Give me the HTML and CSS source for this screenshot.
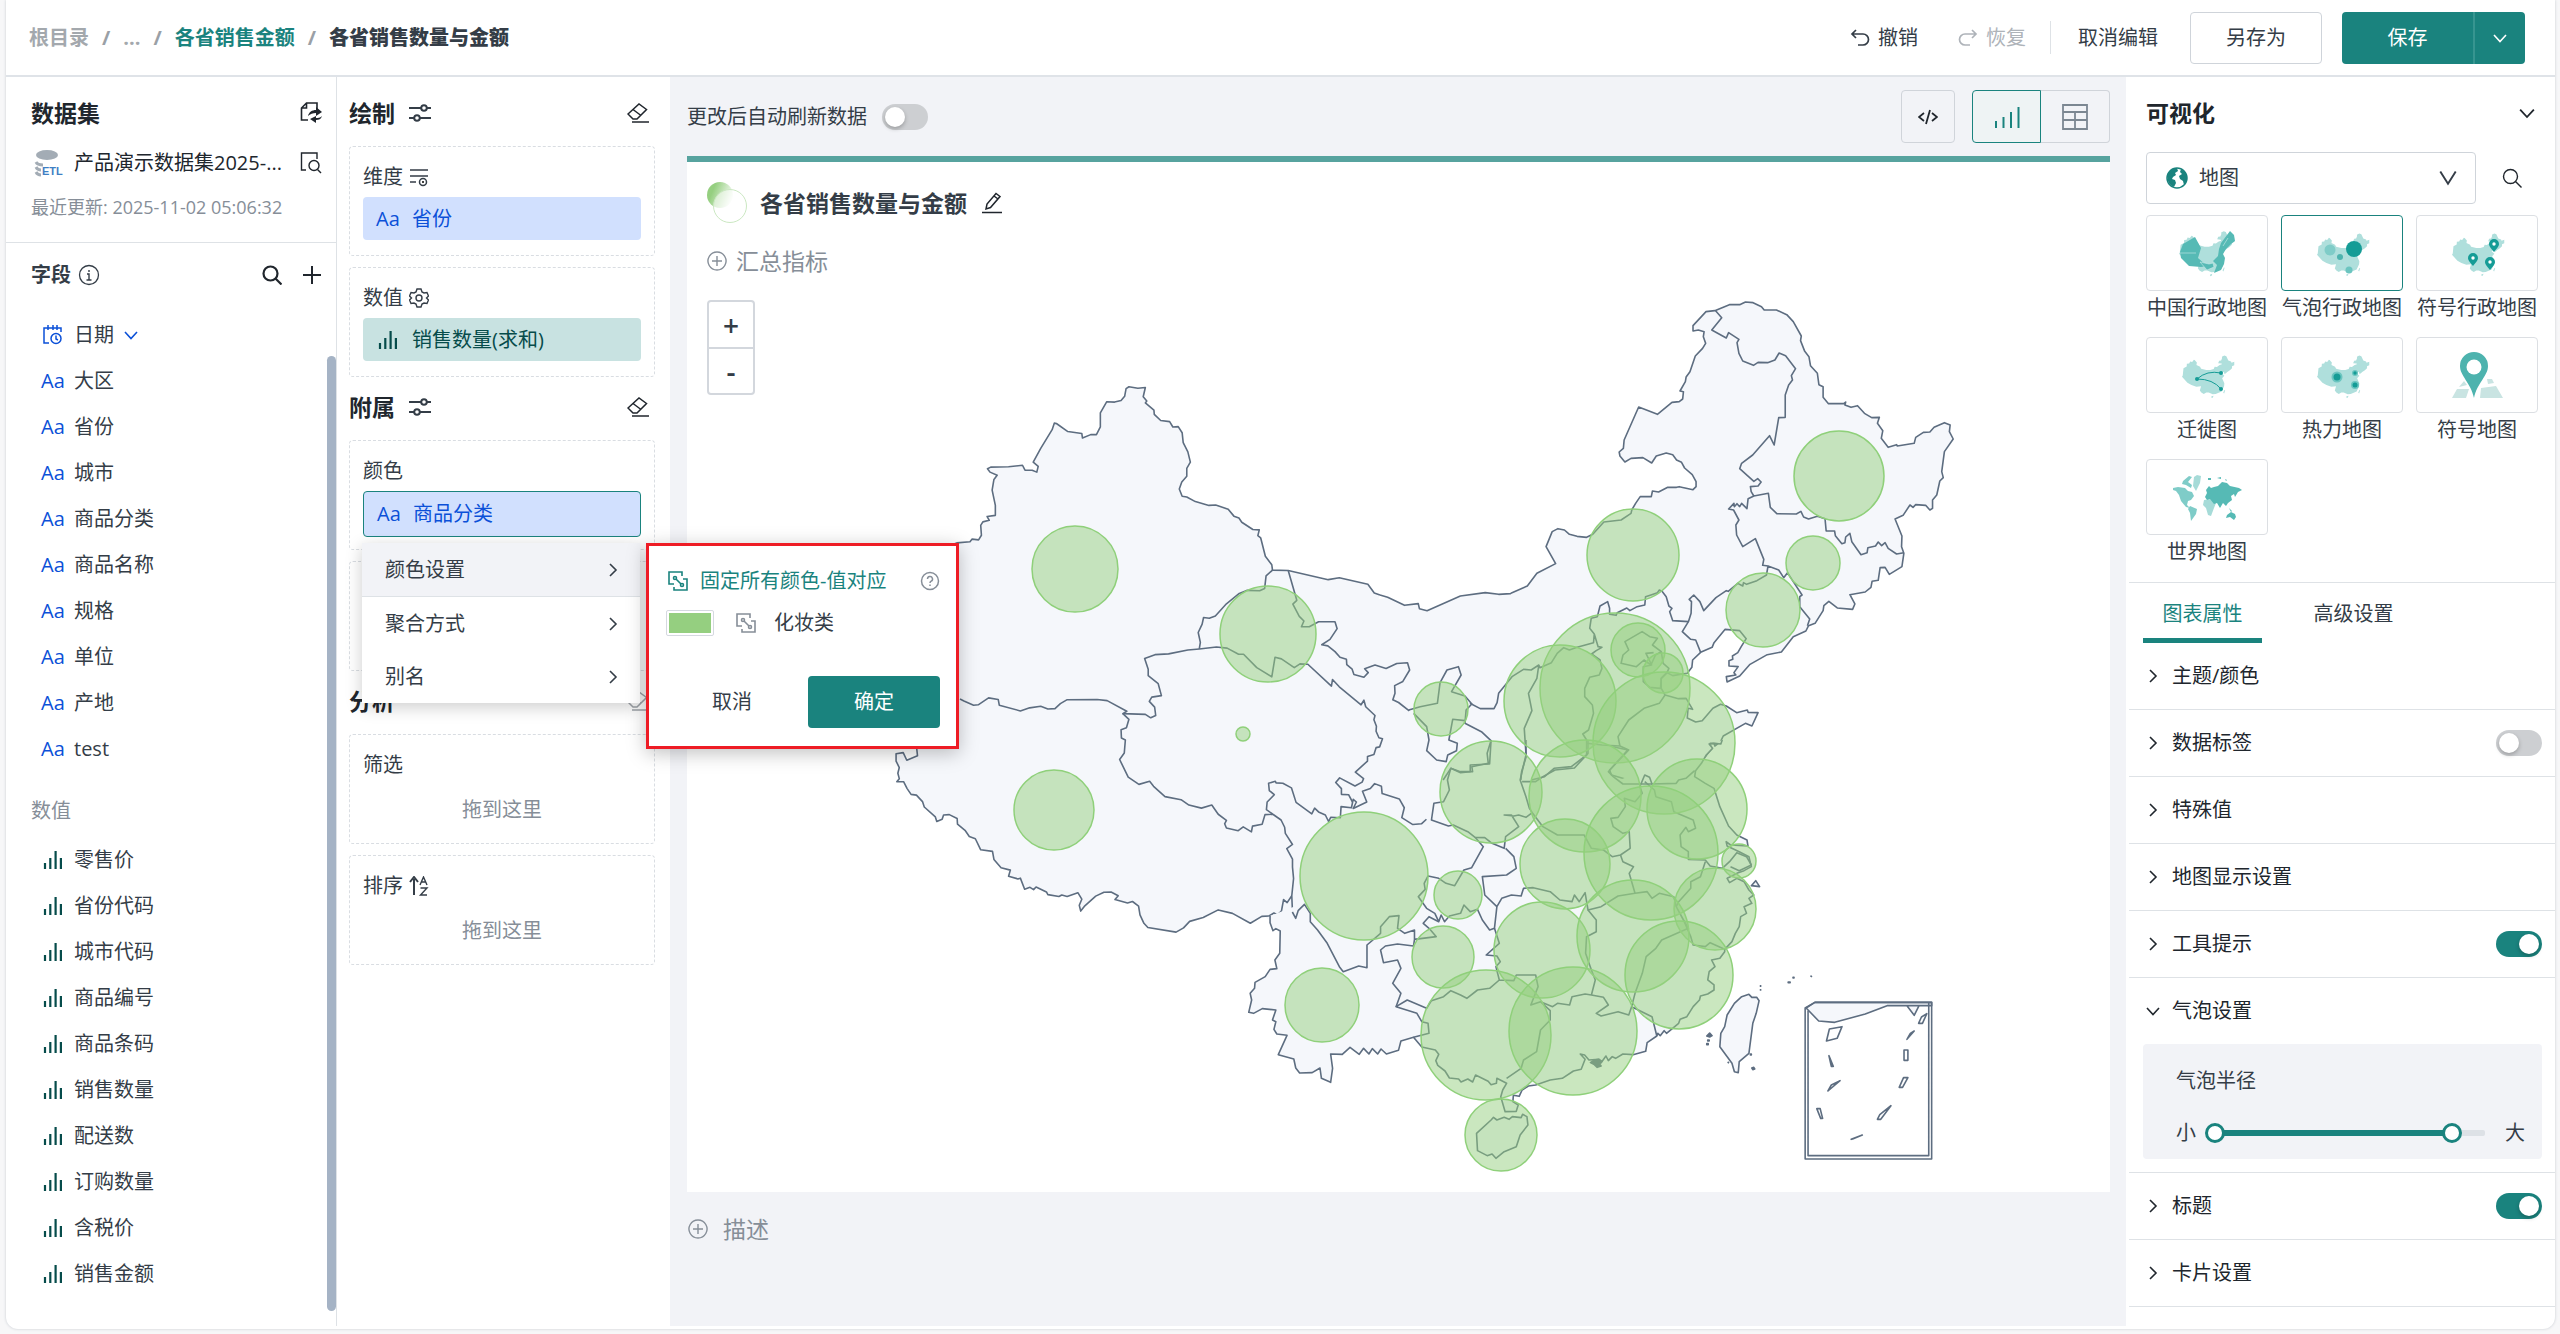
FILE: index.html
```html
<!DOCTYPE html>
<html lang="zh-CN">
<head>
<meta charset="utf-8">
<title>各省销售数量与金额</title>
<link rel="stylesheet" href="styles.css">
</head>
<body>
<svg class="sprite" aria-hidden="true">
  <symbol id="bars" viewBox="0 0 20 20"><path d="M2 19v-6M7.300 19V8M12.600 19V1M17.900 19V8" fill="none" stroke="currentColor" stroke-width="2.200"/></symbol>
  <symbol id="sliders" viewBox="0 0 22 20"><g fill="none" stroke="currentColor" stroke-width="2"><path d="M0 5h12M18 5h4M0 15h5M11 15h11"/><circle cx="15" cy="5" r="2.800"/><circle cx="8" cy="15" r="2.800"/></g></symbol>
  <symbol id="eraser" viewBox="0 0 22 20"><g fill="none" stroke="currentColor" stroke-width="1.500"><path d="M1 11 12 1l7.500 5.500L10 16H6zM6 6.500l8 6M5 19h17"/></g></symbol>
  <symbol id="down" viewBox="0 0 14 14"><path d="M1 4l6 6.500L13 4" fill="none" stroke="currentColor" stroke-width="1.600"/></symbol>
  <symbol id="right" viewBox="0 0 14 14"><path d="M4 1l6 6-6 6" fill="none" stroke="currentColor" stroke-width="1.600"/></symbol>
  <symbol id="search" viewBox="0 0 20 20"><g fill="none" stroke="currentColor"><circle cx="8.500" cy="8.500" r="7"/><path d="M13.500 13.500 19.500 19.500"/></g></symbol>
  <symbol id="pluscircle" viewBox="0 0 20 20"><path d="M10 1a9 9 0 1 0 .01 0M10 5v10M5 10h10" fill="none" stroke="currentColor" stroke-width="1.400"/></symbol>
  <symbol id="link" viewBox="0 0 20 20"><g fill="none" stroke="currentColor" stroke-width="1.600"><path d="M6 13H1V1h13v4M15 8h4v11H6v-3M8 8l5 5"/><circle cx="7" cy="7" r="1.500"/><circle cx="14" cy="14" r="1.500"/></g></symbol>
  <symbol id="china" viewBox="890 295 1070 880"><path d="M890 730 905 705 920 560 985 525 988 465 1035 460 1055 420 1095 430 1130 385 1145 390 1190 440 1182 495 1255 530 1275 568 1380 595 1460 596 1530 575 1550 530 1595 535 1650 495 1695 480 1690 460 1620 455 1640 407 1680 400 1700 350 1695 325 1745 300 1785 315 1825 400 1880 420 1890 447 1945 425 1945 500 1900 520 1900 560 1850 605 1810 630 1750 680 1735 630 1690 660 1745 712 1700 760 1745 860 1740 920 1690 1030 1570 1080 1510 1085 1430 1050 1380 1050 1330 1080 1280 1050 1250 1010 1275 920 1180 930 1080 895 1000 850ZM1480 1130 1525 1115 1515 1150 1490 1160ZM1748 995 1762 1000 1740 1070 1722 1050Z" fill="currentColor"/></symbol>
</svg>

<div class="app">
<header class="topbar">
  <nav class="crumbs" aria-label="面包屑">
    <a href="#" class="muted">根目录</a><span>/</span><a href="#" class="muted">...</a><span>/</span><a href="#">各省销售金额</a><span>/</span><strong>各省销售数量与金额</strong>
  </nav>
  <div class="actions">
    <button class="plain"><svg class="i20" viewBox="0 0 20 20"><path d="M6 2 2 6l4 4M2 6h11a5 5 0 0 1 0 11H8" fill="none" stroke="currentColor" stroke-width="1.700"/></svg>撤销</button>
    <button class="plain redo" disabled><svg class="i20" viewBox="0 0 20 20"><path d="M14 2l4 4-4 4M18 6H7a5 5 0 0 0 0 11h5" fill="none" stroke="currentColor" stroke-width="1.700"/></svg>恢复</button>
    <span class="vline"></span>
    <button class="plain">取消编辑</button>
    <button class="outline">另存为</button>
    <div class="split"><button>保存</button><button class="more" aria-label="更多"><svg class="i14" ><use href="#down"/></svg></button></div>
  </div>
</header>

<div class="work">
<aside class="fields">
  <section class="dataset">
    <div class="head"><h2>数据集</h2><button class="icon" aria-label="更换数据集"><svg class="i22" viewBox="0 0 22 22"><path d="M8 18H1.500V6l5-5H17v6M6.500 1v5h-5" fill="none" stroke="currentColor" stroke-width="1.600"/><path d="M8 14c1-4 4-6 8-6V5l6 5-6 4v-3c-3 0-6 1-8 3zM22 14c-1 3-3 4-6 4v3l-6-4 6-3v2c2 0 4 0 6-2z" fill="currentColor"/></svg></button></div>
    <div class="dsrow">
      <svg class="etl" viewBox="0 0 28 26"><ellipse cx="12" cy="5" rx="11" ry="5" fill="#a3acb5"/><path d="M1 12c1 2 3 3 7 3M1 17c1 2 3 3 5 3M1 22c1 2 3 3 5 3" fill="none" stroke="#a3acb5" stroke-width="3"/><text x="7" y="25" class="etltext">ETL</text></svg>
      <span class="name">产品演示数据集2025-...</span>
      <button class="icon" aria-label="预览"><svg class="i22" viewBox="0 0 22 22"><g fill="none" stroke="currentColor" stroke-width="1.400"><path d="M6 18H1.500V1H17v6"/><circle cx="14" cy="13.500" r="5"/><path d="M17.500 17.500 21 21"/></g></svg></button>
    </div>
    <p class="updated">最近更新: 2025-11-02 05:06:32</p>
  </section>
  <section class="list">
    <div class="head small"><h3>字段</h3><svg class="i22" viewBox="0 0 22 22"><circle cx="11" cy="11" r="9.500" fill="none" stroke="currentColor" stroke-width="1.300"/><path d="M11 6v2M9 10h2v6M8.500 16h5" fill="none" stroke="currentColor" stroke-width="1.400"/></svg>
      <span class="grow"></span><button class="icon bold" aria-label="搜索"><svg class="i20"><use href="#search"/></svg></button><button class="icon" aria-label="新建"><svg class="i20" viewBox="0 0 20 20"><path d="M10 1v18M1 10h18" stroke="currentColor" stroke-width="2"/></svg></button></div>
    <ul class="dims">
      <li><svg class="cal" viewBox="0 0 20 20"><g fill="none" stroke="currentColor" stroke-width="1.500"><path d="M6 18H1V3h17v4M5 0v5M10 0v5M14 0v5"/><circle cx="13" cy="13.500" r="5"/><path d="M13 10.500v3.500l2 1"/></g></svg>日期<svg class="i14 blue"><use href="#down"/></svg></li>
      <li><i>Aa</i>大区</li><li><i>Aa</i>省份</li><li><i>Aa</i>城市</li><li><i>Aa</i>商品分类</li><li><i>Aa</i>商品名称</li><li><i>Aa</i>规格</li><li><i>Aa</i>单位</li><li><i>Aa</i>产地</li><li><i>Aa</i>test</li>
    </ul>
    <h4>数值</h4>
    <ul class="measures">
      <li><svg><use href="#bars"/></svg>零售价</li><li><svg><use href="#bars"/></svg>省份代码</li><li><svg><use href="#bars"/></svg>城市代码</li><li><svg><use href="#bars"/></svg>商品编号</li><li><svg><use href="#bars"/></svg>商品条码</li><li><svg><use href="#bars"/></svg>销售数量</li><li><svg><use href="#bars"/></svg>配送数</li><li><svg><use href="#bars"/></svg>订购数量</li><li><svg><use href="#bars"/></svg>含税价</li><li><svg><use href="#bars"/></svg>销售金额</li>
    </ul>
    <div class="scroll"></div>
  </section>
</aside>

<aside class="shelves">
  <div class="shead"><h2>绘制</h2><svg class="sl"><use href="#sliders"/></svg><span class="grow"></span><button class="icon" aria-label="清空绘制"><svg class="sl"><use href="#eraser"/></svg></button></div>
  <div class="box"><div class="label">维度<svg class="i20" viewBox="0 0 20 20"><g fill="none" stroke="currentColor" stroke-width="1.500"><path d="M1 3h18M1 9h18M1 15h6"/><circle cx="14" cy="15" r="3.500"/></g><circle cx="14" cy="15" r="1"/></svg></div><div class="pill dim"><i>Aa</i>省份</div></div>
  <div class="box"><div class="label">数值<svg class="i20" viewBox="0 0 20 20"><g fill="none" stroke="currentColor" stroke-width="1.400"><path d="M8 1h4l1 3 2 1 3-.500 1.500 3.500-2 2 2 2L18 15.500l-3-.500-2 1-1 3H8l-1-3-2-1-3 .500L.500 12l2-2-2-2L2 4.500 5 5l2-1z"/><circle cx="10" cy="10" r="3"/></g></svg></div><div class="pill mea"><svg><use href="#bars"/></svg>销售数量(求和)</div></div>
  <div class="shead"><h2>附属</h2><svg class="sl"><use href="#sliders"/></svg><span class="grow"></span><button class="icon" aria-label="清空附属"><svg class="sl"><use href="#eraser"/></svg></button></div>
  <div class="box"><div class="label">颜色</div>
    <div class="pill dim open"><i>Aa</i>商品分类
      <div class="menu">
        <button class="on">颜色设置<svg class="i14"><use href="#right"/></svg></button>
        <button>聚合方式<svg class="i14"><use href="#right"/></svg></button>
        <button>别名<svg class="i14"><use href="#right"/></svg></button>
        <div class="flyout">
          <div class="frow teal"><svg class="i20"><use href="#link"/></svg><span>固定所有颜色-值对应</span><span class="grow"></span><svg class="i20 help" viewBox="0 0 20 20"><g fill="none" stroke="currentColor" stroke-width="1.500"><circle cx="10" cy="10" r="8.500"/><path d="M7.500 8a2.500 2.500 0 1 1 3.700 2.200c-.9.500-1.200.9-1.200 1.800M10 13.500v1.500"/></g></svg></div>
          <div class="frow"><button class="swatch" aria-label="选择颜色"></button><svg class="i20 help"><use href="#link"/></svg><span class="cat">化妆类</span></div>
          <div class="fbtns"><button>取消</button><button class="primary">确定</button></div>
        </div>
      </div>
    </div>
  </div>
  <div class="box"></div>
  <div class="shead"><h2>分析</h2><span class="grow"></span><button class="icon faded" aria-label="清空分析"><svg class="sl"><use href="#eraser"/></svg></button></div>
  <div class="box"><div class="label">筛选</div><p class="drop">拖到这里</p></div>
  <div class="box"><div class="label">排序<svg class="i20" viewBox="0 0 20 20"><path d="M5 19V3M1 6l4-5 4 5" fill="none" stroke="currentColor" stroke-width="2"/><path d="M11 9l3.500-8L18 9M12.500 6h4M11.500 12H18l-6.500 7H18" fill="none" stroke="currentColor" stroke-width="1.400"/></svg></div><p class="drop">拖到这里</p></div>
</aside>

<main>
  <div class="tools">
    <label class="auto">更改后自动刷新数据<input type="checkbox" class="switch"></label>
    <span class="grow"></span>
    <button class="tool code" aria-label="代码"><svg class="i20" viewBox="0 0 20 20"><path d="M6 6l-5 4 5 4M14 6l5 4-5 4M12 3 8 17" fill="none" stroke="currentColor" stroke-width="1.800"/></svg></button>
    <div class="views"><button class="tool on" aria-label="图表"><svg class="i26" viewBox="0 0 26 26"><path d="M2 24v-7M9.500 24V13M17 24V8M24.500 24V3" fill="none" stroke="currentColor" stroke-width="2"/></svg></button><button class="tool" aria-label="表格"><svg class="i26" viewBox="0 0 26 26"><path d="M1 1h24v24H1zM1 8h24M1 16h24M13 8v17" fill="none" stroke="currentColor" stroke-width="1.800"/></svg></button></div>
  </div>
  <article class="card">
    <div class="ctitle"><svg class="dot" viewBox="0 0 42 42"><defs><linearGradient id="fade" x1="0" y1=".3" x2="1" y2=".7"><stop offset=".2" stop-color="#95cf80"/><stop offset="1" stop-color="#fff"/></linearGradient></defs><circle cx="13" cy="13" r="13" fill="url(#fade)"/><circle cx="23" cy="24" r="16.500" fill="#fff" fill-opacity=".55" stroke="#cbe8c2"/></svg><h1>各省销售数量与金额</h1>
      <button class="icon" aria-label="编辑标题"><svg class="i22" viewBox="0 0 22 22"><path d="M5 17l1-5L15 1.500l4 3L9.500 15.500zM13 4l4 3M1 20.500h20" fill="none" stroke="currentColor" stroke-width="1.500"/></svg></button></div>
    <button class="add"><svg class="i20"><use href="#pluscircle"/></svg>汇总指标</button>
    <div class="mapwrap">
      <div class="zoomer"><button aria-label="放大">+</button><button aria-label="缩小">-</button></div>
      <svg class="map" viewBox="687 291 1423 901" role="img" aria-label="各省销售数量气泡图">
        <path class="base" d="M1374 600 1250 905 1275 925 1722 744 1700 752 1386 598Z"/>
        <!-- west -->
        <g class="land" transform="translate(880 360) scale(.35714 .38268)">
          <path d="M1089 1453 1069 1454 1037 1472 987 1446 947 1437 905 1457 867 1467 850 1484 829 1495 750 1483 739 1472 728 1450 724 1427 707 1415 693 1419 658 1410 667 1400 647 1390 627 1391 604 1401 572 1428 562 1440 558 1425 565 1409 554 1392 524 1402 509 1398 501 1402 470 1397 466 1390 437 1377 430 1384 420 1378 405 1383 393 1354 386 1356 360 1349 365 1333 339 1327 319 1305 315 1284 282 1280 267 1251 250 1245 238 1229 217 1213 216 1198 194 1188 178 1189 174 1200 159 1206 155 1194 124 1168 119 1154 102 1137 87 1135 76 1120 66 1102 47 1102 54 1094 50 1080 54 1065 45 1048 45 1029 65 1026 75 1046 105 1034 103 1017 110 900 150 500 215 478 252 475 258 468 276 470 284 458 282 432 288 423 306 419 300 409 323 406 323 380 314 340 319 312 328 301 308 293 301 284 310 280 360 279 399 275 406 288 426 288 439 293 443 278 429 267 450 231 482 182 488 165 494 166 526 187 565 192 567 204 590 195 606 195 617 175 617 138 635 109 657 110 675 106 685 95 689 75 697 70 722 74 743 72 737 96 747 107 743 112 767 131 768 142 786 158 811 161 820 175 835 174 846 190 849 216 862 240 869 267 859 283 859 304 845 319 838 337 846 356 859 358 883 370 921 380 940 379 975 390 991 408 1005 413 1013 424 1044 443 1062 444 1058 459 1066 465 1079 513 1097 535 1099 549 1143 550 1255 574 1286 569 1366 586 1384 609 1400 614"/>
          <path class="line" d="M224 886 235 891 262 902 275 901 304 883 331 887 334 902 393 917 419 909 450 905 470 912 490 911 505 898 523 888 608 887 636 890 691 918 680 924 743 926 758 935 772 929 769 907 754 892 761 881 788 877 779 846 751 825 751 808 741 780 770 770 808 768 862 758 894 755 942 750 972 753 1004 769 1018 769 1055 804 1097 828 1106 777 1124 781 1160 804 1176 794 1198 795 1264 852 1267 835 1286 854 1347 901 1355 889 1360 906 1386 929 1383 940 1390 957 1389 970 1397 987 1407 990 1399 1011 1389 1013 1383 1031 1365 1036 1365 1048 1331 1077 1354 1094 1350 1103 1330 1113 1287 1092 1276 1104 1292 1120 1292 1135 1312 1136 1323 1155"/>
          <path class="line" d="M894 755 897 738 891 712 902 690 906 673 922 675 939 669 970 637 1006 610 1027 602 1063 603 1077 597 1081 564 1099 549M1143 550 1160 605 1167 628 1156 638 1174 670 1187 682 1180 697 1202 697 1228 684 1274 684 1280 702 1260 730 1237 744 1254 747 1274 762 1288 777 1306 782 1307 796 1322 808 1327 822 1355 829 1367 817 1357 807 1386 797 1417 806 1447 793 1477 791 1483 810 1464 840 1441 851 1442 871 1436 888 1452 895 1482 917"/>
          <path class="line" d="M680 924 697 939 690 961 675 966 676 988 687 993 684 1027 671 1044 695 1090 725 1109 755 1101 766 1114 798 1141 843 1149 865 1163 900 1171 929 1163 947 1187 970 1203 965 1212 970 1223 1003 1230 1017 1220 1040 1233 1043 1218 1070 1213 1078 1188 1100 1187 1123 1202 1133 1221 1135 1237 1155 1266 1139 1277 1155 1304 1155 1325 1158 1355 1153 1400 1155 1443M1100 1187 1082 1175 1084 1155 1104 1136 1090 1125 1088 1106 1107 1101 1109 1105 1128 1106 1152 1118 1165 1156 1209 1186 1217 1171 1228 1181 1247 1189 1256 1206 1262 1195 1289 1196 1291 1167 1320 1170 1325 1148 1334 1155 1325 1172 1363 1155 1351 1127 1373 1120 1385 1107 1404 1114 1406 1133 1454 1147 1468 1170 1461 1196 1492 1214 1516 1212 1530 1200M1153 1400 1140 1418 1130 1410 1124 1440 1113 1450 1103 1445 1089 1453"/>
        </g>
        <!-- north-east -->
        <g class="land" transform="translate(1380 280) scale(.38265 .33333)">
          <path d="M838 1435 850 1430 865 1408 863 1390 873 1390 875 1398 890 1385 897 1368 955 1330 972 1338 988 1298 962 1297 960 1290 932 1298 905 1278 890 1273 870 1285 842 1322 825 1326 803 1314 805 1285 817 1288 800 1255 780 1256 745 1245 735 1225 735 1195 750 1178 765 1187 803 1180 815 1162 817 1140 838 1117 868 1102 873 1088 902 1048 940 1052 957 1076 944 1100 935 1118 921 1128 922 1138 912 1142 912 1158 936 1160 925 1178 930 1185 905 1190 907 1206 940 1188 967 1153 1012 1124 1049 1116 1080 1070 1113 1053 1120 1037 1137 1030 1158 992 1160 977 1173 964 1195 984 1235 988 1241 972 1228 944 1268 936 1283 922 1286 904 1302 901 1307 863 1320 862 1331 883 1364 860 1369 820 1363 800 1364 768 1346 717 1367 706 1385 675 1393 682 1400 674 1426 676 1437 690 1444 685 1444 660 1455 645 1463 603 1472 593 1468 575 1475 515 1498 477 1488 455 1490 435 1475 428 1448 442 1437 456 1420 457 1400 472 1396 490 1352 498 1350 494 1328 502 1310 475 1314 452 1300 430 1305 412 1285 413 1266 400 1248 377 1231 382 1215 375 1217 366 1212 371 1172 371 1158 352 1158 320 1147 314 1143 280 1125 257 1121 230 1110 214 1099 182 1101 168 1080 125 1063 104 1036 90 1004 90 997 80 975 68 955 66 940 74 913 74 875 92 852 95 818 137 818 153 832 150 847 155 845 170 851 190 843 205 824 228 810 275 800 291 798 305 784 333 793 335 791 357 782 365 763 367 725 403 676 381 638 480 636 505 625 516 627 528 640 546 656 535 687 533 710 549 722 528 748 519 765 524 775 540 788 547 796 564 816 584 826 605 826 620 818 629 782 620 775 622 752 622 728 636 712 633 709 650 680 650 668 670 658 690 656 700 630 720 585 726 556 763 540 772 515 769 495 763 482 750 465 746 450 755 434 800 459 851 410 880 385 918 345 938 341 941 310 943 275 938 210 948 123 992 103 986 100 971 64 976 20 952 0 945"/>
          <path class="line" d="M877 92 893 113 867 150 905 174 911 158 938 178 933 188 938 220 948 243 976 256 988 247 1013 248 1032 240 1043 219 1060 227 1086 266 1075 287 1078 300 1068 315 1059 345 1059 412 1042 413 1030 495 1018 467 974 525 945 550 940 566 977 604 987 596 996 606 988 618 968 620 970 635 977 648 1015 640 1020 682 1037 701 1088 702 1100 694 1107 711 1120 717 1143 709 1163 716 1166 753 1188 753 1190 767 1207 791 1215 788 1217 771 1228 760 1233 785 1257 824 1273 818 1275 803 1295 798 1302 786 1311 797 1320 788 1328 805 1350 822 1369 818"/>
          <path class="line" d="M977 648 962 656 959 686 945 670 940 680 933 671 926 680 925 670 911 687 924 690 938 720 930 735 932 765 948 800 981 776 1003 838 1000 856 1014 858 1010 885 985 902 958 913 950 908 948 918 935 910 910 934 905 932 878 953 846 992 836 965 820 945 808 958 814 965 813 1000 806 1025 790 1055 812 1078 825 1080 838 1117M1014 858 1042 870 1055 893 1065 878 1080 905 1103 945 1097 950 1097 980 1123 1017 1117 1037"/>
          <path class="line" d="M806 1025 765 1022 757 995 763 985 755 978 748 950 738 935 730 930 725 938 710 944 694 950 692 975 672 980 653 992 645 984 620 998 617 1006 600 1003 600 985 595 965 575 978 568 1010 552 1015 548 1045 560 1062 570 1100 580 1102 565 1112 553 1122 575 1140 580 1165 573 1185 548 1192 535 1225 535 1250 555 1275 558 1300 545 1350 530 1362 540 1380 540 1425 500 1460 455 1465 430 1490 395 1500M560 1062 558 1088 515 1102 495 1110 480 1103 463 1120 448 1148 418 1163 415 1155 395 1170 375 1168 345 1190 310 1240 306 1268 298 1286 262 1286 235 1270M415 1155 410 1195 388 1240 397 1292 377 1345 382 1430 370 1475 368 1500"/>
          <path class="line" d="M75 1290 105 1280 150 1270 157 1208 175 1170 205 1160 212 1185 187 1235 222 1248 240 1272 225 1290 222 1330 265 1355 290 1382 280 1420 283 1450 240 1460 242 1475 210 1475 185 1465 165 1500M222 1322 190 1318 180 1380 202 1390 200 1412 177 1425 173 1445 148 1440 122 1412 128 1380 122 1340 88 1300M540 1390 580 1395 627 1398 622 1370 650 1320 690 1285 730 1270 745 1245M627 1398 650 1410 600 1470 605 1485 650 1500"/>
          <path class="line" d="M640 1085 685 1055 705 1070 725 1075 712 1095 735 1115 720 1125 708 1155 690 1140 670 1160 630 1150 635 1125 650 1110ZM735 1115 740 1150 755 1165 750 1178 735 1195 733 1225 705 1222 688 1205 688 1160 710 1155 695 1120 715 1118"/>
        </g>
        <!-- south-east -->
        <g class="land" transform="translate(1240 740) scale(.48469 .33333)">
          <path d="M62 528 62 548 68 572 74 566 83 573 82 640 72 660 76 686 62 688 52 710 31 727 30 745 21 760 24 780 18 817 28 820 46 806 74 810 67 840 74 845 70 868 76 882 97 886 79 944 111 957 115 984 123 999 149 998 165 984 168 1015 187 1027 191 985 187 942 211 943 227 922 246 943 255 925 266 942 273 926 284 942 291 927 302 942 327 931 332 903 358 892 375 921 403 930 410 943 404 962 408 976 423 993 432 1014 451 1017 456 1026 470 1017 480 1026 486 1005 512 1024 518 1034 529 1030 530 1015 550 1030 542 1050 538 1070 547 1115 570 1114 574 1095 563 1085 564 1066 576 1069 582 1050 595 1038 610 1035 640 1020 665 1015 688 993 704 988 712 958 702 942 711 945 720 960 740 958 745 968 755 948 760 962 768 950 775 955 790 942 811 944 837 934 840 908 860 888 862 880 867 887 875 872 880 880 890 868 905 850 908 838 922 830 935 800 948 780 950 768 965 762 978 750 978 735 965 720 968 695 980 680 973 660 990 655 1000 635 1000 628 1015 605 1022 580 1030 560 1033 530 1045 520 1040 500 1056 490 1050 475 1060 465 1050 450 1040 425 1025 415 1010 428 1005 415 1015 408 1025 400 1040 392 1055 380 1050 350 1030 335 1005 318 1003 305 1012 315 1048 318 1046 300 1025 285 1008 258 990 200 978 145 960 130 938 110 940 92 952 70 962 45 975 25 968 12 980 10 992 12 995 0"/>
          <path class="line" d="M590 0 590 45 578 120 590 170 597 205 603 218M582 125 610 125 625 110 650 90 690 84 718 40 718 0M518 0 515 72 475 75 475 95 455 98 435 85 428 120 432 150 420 185 400 190 395 240 430 258 440 255 470 275 485 292 505 293 520 310 545 325 548 290 575 260 560 225 545 225 565 228 575 225 590 232 603 218 625 260 655 285 710 285 725 325 750 330 768 350 785 345 805 325 803 275 790 280 770 260 765 235 780 232 795 200 793 175 815 185 830 160 825 140 835 105 845 112 850 132 790 132 770 110 760 95 800 30 770 20"/>
          <path class="line" d="M485 292 502 320 478 383 462 390 443 437 425 430 410 415 388 408 380 430 382 448 368 470 385 505 402 520 410 545 415 525 422 545 432 528 455 520 462 495 475 515 490 508 500 540 515 570 525 565 530 500 505 465 500 410 550 405 570 385 565 350 548 325M530 500 540 475 560 465 580 468 585 445 605 443 640 455 660 480 685 485 690 465 700 485 712 458 718 510 745 500 780 468 815 460 840 455 850 475 865 460 895 470 900 500 915 540 925 565 870 600 858 625 838 650 830 700 815 760 808 800"/>
          <path class="line" d="M785 345 790 365 812 380 803 400 815 460M915 540 930 590 935 615 960 620 970 608 1000 628M835 125 855 150 858 170 890 185 895 215 935 240 940 265 925 275 920 262 908 285 910 320 925 335 925 358 960 360 970 378 995 385 1010 365 1025 338 1045 350 1055 375 1030 392 1012 380M960 365 950 410 930 425 930 445 905 485 900 500M848 132 900 130 905 120 920 115 938 92M718 510 735 540 735 575 715 590 713 640 725 690 733 720 725 765"/>
          <path class="line" d="M525 565 535 610 508 645 530 648 537 665 528 680 535 720 515 745 490 750 468 775 455 765 435 752 420 770 395 782 385 805 345 780 322 800 365 820 375 845 388 850 390 880 358 892M535 720 565 722 570 705 610 705 615 740 600 795 620 785 645 800 655 790 680 795 685 770 712 762 725 765 750 772 760 795 735 820 745 828 780 815 802 825 808 800 850 830 860 888M620 785 640 812 640 840 620 870 612 935 585 960 580 985 550 1015"/>
          <path class="line" d="M108 516 115 535 120 512 133 493 145 520 145 545 160 570 180 610 205 680 213 695 245 678 262 683 262 615 290 580 290 560 308 530 328 527 325 565 340 580 360 570 360 598 405 590 390 565 378 550 390 530 410 545M360 598 358 618 325 612 300 618 290 630 296 668 325 660 332 685 315 730 332 760 322 800"/>
          <path d="M488 1180 518 1140 523 1132 530 1140 545 1132 555 1138 562 1130 580 1133 583 1123 592 1130 594 1155 578 1185 570 1220 545 1235 528 1255 520 1242 510 1247 490 1232ZM1050 763 1056 772 1066 772 1071 782 1065 820 1058 850 1050 940 1030 965 1028 998 1020 995 1015 970 990 920 992 880 1000 860 1005 825 1020 790 1035 770ZM1055 437 1064 422 1072 440Z"/>
          <path class="ink" d="M723 968l8-8 10-2 6 6-5 8 3 6-8 4-6-8zM963 888l6-9 5 8-5 4zM965 900h3v3h-3zM963 911h3v3h-3zM1053 942h2v3h-2zM1056 984l4-2 2 5-4 2zM1074 735v6M1074 747v5M1131 726h4v2h-4zM1141 712h2v2h-2zM1177 707l3 4M1006 966l3 3"/>
          <path d="M1168 804 1186 787H1427V797H1335L1290 822 1227 847 1194 843ZM1376 797 1391 826 1401 797Z"/>
          <path class="line" d="M1166 804V1257H1427V787H1186ZM1172 812V1247H1421V787M1210 903 1216 867 1242 860 1232 895ZM1215 947 1224 979H1220ZM1213 1053 1220 1035 1238 1022ZM1190 1106H1197L1202 1135H1198ZM1261 1198 1284 1185 1264 1197ZM1315 1138 1320 1124 1343 1097 1322 1138ZM1360 1042 1369 1013H1378L1367 1042ZM1370 930H1378V961H1370ZM1376 898 1383 880 1391 873ZM1400 850 1406 831 1417 821 1408 850Z"/>
        </g>
        <g class="bubbles">
          <circle cx="1075" cy="569" r="43"/><circle cx="1268" cy="634" r="48"/><circle cx="1243" cy="734" r="7"/><circle cx="1054" cy="810" r="40"/><circle cx="1364" cy="876" r="64"/><circle cx="1839" cy="476" r="45"/><circle cx="1633" cy="555" r="46"/><circle cx="1813" cy="563" r="27"/><circle cx="1763" cy="610" r="37"/><circle cx="1615" cy="688" r="75"/><circle cx="1560" cy="701" r="56"/><circle cx="1638" cy="650" r="27"/><circle cx="1663" cy="673" r="20"/><circle cx="1664" cy="743" r="71"/><circle cx="1441" cy="709" r="27"/><circle cx="1491" cy="792" r="51"/><circle cx="1585" cy="796" r="56"/><circle cx="1697" cy="809" r="50"/><circle cx="1565" cy="864" r="45"/><circle cx="1651" cy="853" r="67"/><circle cx="1458" cy="895" r="24"/><circle cx="1739" cy="861" r="17"/><circle cx="1715" cy="909" r="41"/><circle cx="1443" cy="957" r="31"/><circle cx="1542" cy="950" r="48"/><circle cx="1633" cy="936" r="56"/><circle cx="1679" cy="975" r="54"/><circle cx="1322" cy="1005" r="37"/><circle cx="1486" cy="1035" r="65"/><circle cx="1573" cy="1031" r="64"/><circle cx="1501" cy="1135" r="36"/>
        </g>
      </svg>
    </div>
  </article>
  <button class="add desc"><svg class="i20"><use href="#pluscircle"/></svg>描述</button>
</main>

<aside class="viz">
  <div class="vhead"><h2>可视化</h2><button class="icon" aria-label="收起"><svg class="i16"><use href="#down"/></svg></button></div>
  <div class="pick">
    <div class="selwrap"><svg class="globe" viewBox="0 0 22 22"><circle cx="11" cy="11" r="10" fill="#fff" stroke="#1a837e" stroke-width="1.500"/><path d="M2 6C5 2 8 1 11 1l1 3-3 2 1 2-3 2-1 2 3 1 1 3-2 4C3 18 0 13 2 6zM15 2l4 3 2 4v5l-3 4-1-4-3-2-1-3 3-2-2-2z" fill="#1a837e"/></svg>
      <select aria-label="图表类型"><option>地图</option></select><svg class="i18 arrow" viewBox="0 0 14 14"><path d="M1 2l6 9.500L13 2" fill="none" stroke="currentColor" stroke-width="1.500"/></svg></div>
    <button class="icon" aria-label="搜索图表"><svg class="i20 thin"><use href="#search"/></svg></button>
  </div>
  <div class="types">
    <button><span class="thumb"><svg viewBox="0 0 120 74"><g color="#afdfdc"><use href="#china" x="32" y="15" width="56" height="46"/></g><path d="M33 36l3-8 12-7 6 11-3 10 9 8-6 1-12-1-8-8zM72 33l2-6 9-12 4 4 1 6-4 3-5 5-3 5 2 4-1 6-3 6-7 3 3-8-4-4 5-5z" fill="#56bab5"/><path d="M53 46l9 2 4-1 1 4-7 3zM33 37h16M76 30l5-8" fill="#56bab5" stroke="#c9ebe9" stroke-width=".6"/></svg></span>中国行政地图</button>
    <button class="on"><span class="thumb"><svg viewBox="0 0 120 74" color="#afdfdc"><use href="#china" x="35" y="17" width="53" height="44"/><circle cx="48" cy="34" r="5.500" fill="#7fccc8"/><circle cx="72" cy="33" r="8" fill="#159c96"/><circle cx="58" cy="41" r="3" fill="#4db3ae"/><circle cx="67" cy="54" r="3.500" fill="#6cc5c0"/></svg></span>气泡行政地图</button>
    <button><span class="thumb"><svg viewBox="0 0 120 74" color="#afdfdc"><use href="#china" x="35" y="17" width="53" height="44"/><g fill="#159c96"><path d="M77 23a5 5 0 0 1 5 5c0 3-3 5-5 8-2-3-5-5-5-8a5 5 0 0 1 5-5zM56 37a5 5 0 0 1 5 5c0 3-3 5-5 8-2-3-5-5-5-8a5 5 0 0 1 5-5zM73 41a5 5 0 0 1 5 5c0 3-3 5-5 8-2-3-5-5-5-8a5 5 0 0 1 5-5z"/></g><g fill="#fff"><circle cx="77" cy="28" r="1.700"/><circle cx="56" cy="42" r="1.700"/><circle cx="73" cy="46" r="1.700"/></g></svg></span>符号行政地图</button>
    <button><span class="thumb"><svg viewBox="0 0 120 74" color="#afdfdc"><use href="#china" x="35" y="17" width="53" height="44"/><path d="M50 41q10-9 24-6M50 41q16 0 24 10" fill="none" stroke="#159c96"/><g fill="#159c96"><circle cx="50" cy="41" r="2"/><circle cx="74" cy="35" r="2"/><circle cx="74" cy="51" r="2"/></g></svg></span>迁徙图</button>
    <button><span class="thumb"><svg viewBox="0 0 120 74" color="#afdfdc"><use href="#china" x="35" y="17" width="53" height="44"/><g fill="#6cc5c0"><circle cx="55" cy="39" r="5.500"/><circle cx="73" cy="35" r="3"/><circle cx="73" cy="47" r="4"/></g><g fill="#159c96"><circle cx="55" cy="39" r="3.500"/><circle cx="73" cy="35" r="1.700"/><circle cx="73" cy="47" r="2.500"/></g></svg></span>热力地图</button>
    <button><span class="thumb"><svg viewBox="0 0 120 74"><path d="M40 51h12l-3 9H35zM47 43l3 4-8 2zM64 50l15-2 7 12H63zM70 41h5l2 4-6 1z" fill="#c9e4e2"/><path d="M57 14a14 14 0 0 1 14 14c0 10-11 17-14 32-3-15-14-22-14-32a14 14 0 0 1 14-14z" fill="#4db3ae"/><circle cx="57" cy="29" r="7.500" fill="#fff"/></svg></span>符号地图</button>
    <button><span class="thumb"><svg viewBox="0 0 120 74"><path d="M26 28l5-1 7 1 3 3 4 1 2 4-3 4-3 1-1 4 3 3-4-1-5-6-2-6-3-4-3-1zM36 21l6-5 3 1-4 5 4 3-1 3-5-3-4-1zM43 46l7 3-1 5-5 7-1-8-2-4z" fill="#7fccc8"/><path d="M47 17l3-2 4 1-1 7-4 8-3-5zM57 40l7-1 5 4-2 5-3 8-3-1-2-7-3-3z" fill="#a6dbd8"/><path d="M58 37l2-4-1-3 3-4 2 2 3-1 4-1 4-4 5 1 3 3 9 2 3 2-4 2-3 5-1-3-3 2 1 4-4 3-2 3-3-3-3 5-3-5-3 1-4-5-3 1zM80 55l4-3 4 2 1 3-2 3-4-3-4 1zM82 48l3 3-1 1zM61 18h3v2h-3zM70 18l4-1v2zM78 19l2 1-1 1z" fill="#56bab5"/></svg></span>世界地图</button>
  </div>
  <div class="tabs" role="tablist"><button role="tab" aria-selected="true">图表属性</button><button role="tab" aria-selected="false">高级设置</button></div>
  <div class="props">
    <div class="prop"><button><svg class="i14"><use href="#right"/></svg>主题/颜色</button></div>
    <div class="prop"><button><svg class="i14"><use href="#right"/></svg>数据标签</button><input type="checkbox" class="switch" aria-label="数据标签"></div>
    <div class="prop"><button><svg class="i14"><use href="#right"/></svg>特殊值</button></div>
    <div class="prop"><button><svg class="i14"><use href="#right"/></svg>地图显示设置</button></div>
    <div class="prop"><button><svg class="i14"><use href="#right"/></svg>工具提示</button><input type="checkbox" class="switch" checked aria-label="工具提示"></div>
    <div class="prop tall"><button><svg class="i14"><use href="#down"/></svg>气泡设置</button>
      <div class="panel"><div>气泡半径</div><div class="range"><span>小</span><div class="dual"><div class="rail"><div class="fill" style="width:91%"></div></div><input type="range" min="0" max="100" value="0" aria-label="最小半径"><input type="range" min="0" max="100" value="91" aria-label="最大半径"></div><span>大</span></div></div>
    </div>
    <div class="prop"><button><svg class="i14"><use href="#right"/></svg>标题</button><input type="checkbox" class="switch" checked aria-label="标题"></div>
    <div class="prop"><button><svg class="i14"><use href="#right"/></svg>卡片设置</button></div>
  </div>
</aside>
</div>
</div>
</body>
</html>
```
FILE: styles.css
```css
:root { --teal: #1a837e; --ink: #343d47; --grey: #868e98; --line: #dee2e6; --blue: #0b50d8; }
* { box-sizing: border-box; }
body { margin: 0; min-height: 100vh; padding: 0 5px 5px 6px; background: #f7f7f8; color: var(--ink); font: 20px/28px "Open Sans", "Noto Sans CJK SC", sans-serif; display: flex; }
button { border: 0; padding: 0; background: none; font: inherit; color: inherit; cursor: pointer; display: flex; align-items: center; }
a { text-decoration: none; color: var(--teal); }
h1, h2, h3, h4, p, ul { margin: 0; padding: 0; font-size: inherit; font-weight: inherit; list-style: none; }
h2 { font-size: 23px; font-weight: 700; color: #20262d; }
svg { display: block; flex: none; }
.sprite { position: absolute; width: 0; height: 0; }
.i14 { width: 14px; height: 14px; }
.i16 { width: 16px; height: 16px; }
.i18 { width: 18px; height: 18px; }
.i20 { width: 20px; height: 20px; }
.i22 { width: 22px; height: 22px; }
.i26 { width: 26px; height: 26px; }
.sl { width: 22px; height: 20px; }
.grow { flex: 1; }
.icon { color: #20262d; }
.faded { color: #a0a5ab; }
.blue { color: var(--blue); }
.thin { stroke-width: 1.400; }
.bold svg { stroke-width: 2.200; }

.app { flex: 1; display: flex; flex-direction: column; background: #fff; border-radius: 0 0 12px 12px; box-shadow: 0 0 3px #c5cad0; padding-bottom: 3px; }
.topbar { height: 77px; border-bottom: 2px solid #dfe3e8; display: flex; align-items: center; justify-content: space-between; padding: 0 30px 0 23px; }
.crumbs { display: flex; gap: 13px; font-weight: 700; color: #9aa0a6; }
.crumbs .muted { color: #a3a8ad; }
.crumbs strong { color: var(--ink); }
.actions { display: flex; align-items: center; }
.plain { gap: 8px; }
.redo { margin: 0 24px 0 40px; color: #aeb3b9; }
.vline { width: 1px; height: 33px; background: var(--line); margin-right: 27px; }
.outline { justify-content: center; width: 132px; height: 52px; margin: 0 20px 0 32px; border: 1px solid #cfd4da; border-radius: 4px; }
.split { display: flex; height: 52px; background: var(--teal); color: #fff; border-radius: 4px; }
.split button { width: 131px; justify-content: center; }
.split .more { width: 52px; border-left: 2px solid #379590; }

.work { flex: 1; display: grid; grid-template-columns: 331px 333px minmax(0, 1fr) 429px; }
.fields { border-right: 1px solid var(--line); display: flex; flex-direction: column; }
.dataset { padding: 0 14px 21px 25px; border-bottom: 1px solid var(--line); }
.head { height: 72px; display: flex; align-items: center; justify-content: space-between; }
.dsrow { display: flex; align-items: center; height: 28px; padding-left: 4px; color: #20262d; }
.etl { width: 28px; height: 26px; margin-right: 11px; overflow: visible; }
.etltext { font: 700 11px "Liberation Sans", sans-serif; fill: #3f7fc4; }
.name { flex: 1; white-space: nowrap; }
.updated { margin-top: 16px; font-size: 18px; color: var(--grey); }
.list { position: relative; flex: 1; padding: 0 14px 0 25px; }
.head.small { height: 63px; gap: 7px; justify-content: flex-start; }
.head .icon + .icon { margin-left: 13px; }
h3 { font-weight: 700; }
.dims { padding-top: 6px; }
.list li { display: flex; align-items: center; height: 46px; padding-left: 10px; }
i { font-style: normal; color: var(--blue); width: 33px; }
.cal { width: 20px; height: 20px; margin: 0 11px 0 2px; color: var(--blue); }
.list li .i14 { margin-left: 10px; }
.list h4 { margin: 25px 0 12px; color: var(--grey); }
.measures svg, .pill.mea > svg { width: 20px; height: 20px; color: #064c4b; }
.measures svg { margin: 0 11px 0 2px; }
.scroll { position: absolute; right: 0; top: 113px; bottom: 15px; width: 9px; border-radius: 5px; background: #a5b3c5; }

.shelves { padding: 6px 15px 0 12px; }
.shead { height: 63px; display: flex; align-items: center; padding: 0 6px 3px 0; gap: 14px; }
.box { height: 110px; border: 1px dashed #d9dde2; border-radius: 4px; padding: 16px 13px 13px; }
.box + .box { margin-top: 11px; }
.label { display: flex; align-items: center; gap: 6px; }
.pill { position: relative; display: flex; align-items: center; height: 43px; margin-top: 6px; border-radius: 4px; padding-left: 13px; }
.dim { background: #d1e0fe; color: var(--blue); }
.dim i { width: 36px; }
.mea { background: #c8e2e1; color: #064c4b; }
.pill.mea > svg { margin: 0 14px 0 2px; }
.open { height: 46px; border: 1px solid var(--teal); }
.drop { margin-top: 17px; text-align: center; color: var(--grey); }
.menu { position: absolute; z-index: 5; left: -2px; top: 51px; width: 278px; background: #fff; color: var(--ink); box-shadow: 0 4px 16px rgba(0, 0, 0, .2); }
.menu > button { width: 100%; height: 53px; justify-content: space-between; padding: 0 20px 0 23px; }
.menu > .on { height: 54px; background: #f2f3f7; border-bottom: 1px solid var(--line); }
.flyout { position: absolute; left: 284px; top: 0; width: 313px; height: 206px; border: 3px solid #ee1c25; background: #fff; box-shadow: 0 4px 18px rgba(0, 0, 0, .25); padding: 21px 16px 18px 17px; }
.frow { display: flex; align-items: center; height: 28px; margin-bottom: 14px; padding-left: 2px; }
.frow.teal { color: var(--teal); gap: 12px; }
.help { color: var(--grey); }
.swatch { width: 48px; height: 26px; border: 1px solid #d5d9e0; padding: 2px; background: #95cf80 content-box; margin: 0 22px 0 -2px; border-radius: 2px; }
.cat { margin-left: 18px; }
.fbtns { display: flex; margin-top: 39px; justify-content: space-between; }
.fbtns button { width: 132px; height: 52px; justify-content: center; }
.primary { background: var(--teal); color: #fff; border-radius: 4px; }

main { background: #f2f3f7; padding: 0 16px 0 17px; min-width: 0; }
.tools { display: flex; align-items: center; height: 79px; }
.auto { display: flex; align-items: center; gap: 15px; }
.switch { appearance: none; flex: none; margin: 0; width: 46px; height: 26px; border-radius: 13px; background: #cdcfd2; position: relative; }
.switch::before { content: ""; position: absolute; left: 3px; top: 3px; width: 20px; height: 20px; border-radius: 50%; background: #fff; box-shadow: 0 2px 4px rgba(0, 0, 0, .25); }
.switch:checked { background: var(--teal); }
.switch:checked::before { left: 23px; }
.tool { height: 53px; width: 69px; justify-content: center; border: 1px solid #d0d4da; border-radius: 0 4px 4px 0; color: #7c8792; }
.code { width: 54px; border-radius: 4px; color: #20262d; margin-right: 17px; }
.views { display: flex; }
.views .on { border-color: var(--teal); border-radius: 4px 0 0 4px; background: #eef3f4; color: var(--teal); }
.views .tool + .tool { border-left: 0; }
.card { background: #fff; border-top: 6px solid #57a39f; }
.ctitle { display: flex; align-items: center; height: 69px; padding: 13px 20px 0; }
.dot { width: 42px; height: 42px; margin-right: 11px; }
h1 { font-size: 23px; font-weight: 700; margin-right: 14px; }
.add { height: 60px; margin-left: 20px; gap: 9px; font-size: 23px; color: var(--grey); }
.desc { height: 74px; margin-left: 1px; gap: 15px; }
.mapwrap { position: relative; }
.map { width: 100%; height: auto; }
.zoomer { position: absolute; left: 20px; top: 9px; border: 2px solid #d3d7dd; border-radius: 4px; background: #fff; }
.zoomer button { width: 44px; height: 45px; justify-content: center; font-size: 28px; font-weight: 600; }
.zoomer button + button { border-top: 2px solid #d3d7dd; height: 46px; }
.base { fill: #f5f7fb; }
.land path { fill: #f5f7fb; stroke: #5d6d80; stroke-width: 1.600px; vector-effect: non-scaling-stroke; stroke-linejoin: round; }
.land .line { fill: none; }
.land .ink { fill: #5d6d80; }
.bubbles circle { fill: #95cf80; fill-opacity: .5; stroke: #8fd07a; stroke-width: 1.500px; }

.viz { padding-left: 3px; }
.vhead, .pick { display: flex; align-items: center; padding: 0 20px 0 17px; }
.vhead { height: 75px; padding-bottom: 3px; justify-content: space-between; }
.pick { height: 52px; }
.selwrap { position: relative; width: 330px; margin-right: 26px; }
select { appearance: none; width: 100%; height: 52px; border: 1px solid #cfd4da; border-radius: 4px; background: #fff; font: inherit; color: inherit; padding: 0 40px 0 52px; }
.globe { position: absolute; left: 20px; top: 15px; width: 22px; height: 22px; }
.arrow { position: absolute; right: 19px; top: 17px; }
.types { display: grid; grid-template-columns: repeat(3, 122px); gap: 15px 13px; padding: 11px 0 16px 17px; border-bottom: 1px solid var(--line); }
.types button { flex-direction: column; white-space: nowrap; }
.thumb { display: block; border: 1px solid #dcdfe3; border-radius: 4px; width: 122px; height: 76px; margin-bottom: 3px; }
.types .on .thumb { border-color: var(--teal); }
.tabs { display: flex; gap: 32px; padding-left: 14px; }
.tabs button { width: 119px; height: 60px; justify-content: center; padding-top: 7px; border-bottom: 5px solid transparent; }
.tabs [aria-selected="true"] { color: var(--teal); border-color: var(--teal); }
.prop { display: flex; flex-wrap: wrap; align-items: center; justify-content: space-between; height: 67px; border-bottom: 1px solid var(--line); padding: 0 13px 0 17px; color: #20262d; }
.prop > button { gap: 12px; height: 66px; }
.prop.tall { height: auto; padding-bottom: 13px; }
.panel { flex: 1 0 100%; margin-left: -3px; background: #f2f3f7; border-radius: 4px; padding: 23px 17px 12px 33px; color: var(--ink); }
.range { display: flex; align-items: center; margin-top: 24px; gap: 9px; }
.range span:last-child { margin-left: 11px; }
.dual { position: relative; flex: 1; height: 28px; }
.rail { position: absolute; left: 10px; right: 0; top: 11px; height: 6px; background: #dde1e6; border-radius: 2px; }
.fill { height: 100%; background: var(--teal); }
.dual input { appearance: none; position: absolute; left: 0; top: 0; width: 100%; height: 28px; margin: 0; background: none; pointer-events: none; }
.dual input::-webkit-slider-thumb { appearance: none; width: 20px; height: 20px; border-radius: 50%; border: 3px solid var(--teal); background: #fff; pointer-events: auto; }
```
